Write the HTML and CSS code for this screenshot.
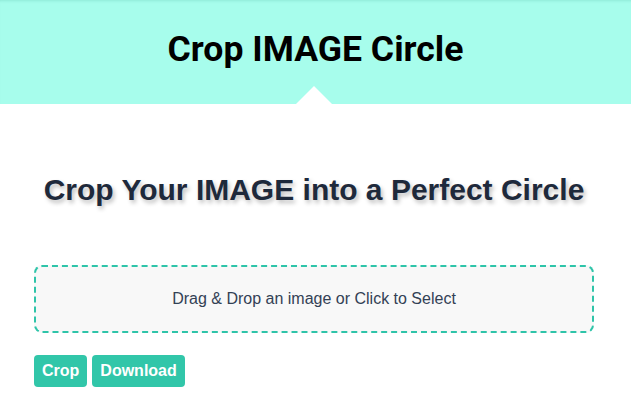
FILE: index.html
```html
<!DOCTYPE html>
<html>
<head>
<meta charset="utf-8">
<link rel="stylesheet" href="styles.css">
</head>
<body>
<header class="top">
  <h1 class="title">Crop IMAGE Circle</h1>
  <span class="arrow"></span>
</header>
<main class="main">
  <h2 class="heading">Crop Your IMAGE into a Perfect Circle</h2>
  <div class="drop">Drag &amp; Drop an image or Click to Select</div>
  <div class="actions">
    <button class="btn">Crop</button>
    <button class="btn">Download</button>
  </div>
</main>
</body>
</html>
```
FILE: styles.css
```css
html, body { margin: 0; padding: 0; background: #fff; }
body { font-family: "Liberation Sans", Arial, sans-serif; }
.top {
  position: relative;
  height: 104px;
  background: #a7fdec;
  box-shadow: inset 0 3px 3px -2px rgba(0,120,100,0.15);
  display: flex;
  align-items: center;
  justify-content: center;
}
.title {
  margin: 0;
  font-family: Roboto, sans-serif;
  font-weight: 700;
  font-size: 35.6px;
  color: #000;
  padding-bottom: 7px;
}
.arrow {
  position: absolute;
  left: 296px;
  bottom: 0;
  width: 0; height: 0;
  border-left: 18px solid transparent;
  border-right: 18px solid transparent;
  border-bottom: 18px solid #fff;
}
.main { padding: 0 37px 0 34px; }
.heading {
  margin: 69px 0 0;
  text-align: center;
  font-size: 30px;
  line-height: 34px;
  font-weight: 700;
  color: #1e293b;
  text-shadow: 2px 3px 4px rgba(0,0,0,0.25);
}
.drop {
  box-sizing: border-box;
  margin-top: 58px;
  height: 68px;
  border: 2px dashed #2ec4a9;
  border-radius: 8px;
  background: #f8f8f8;
  display: flex;
  align-items: center;
  justify-content: center;
  font-size: 16px;
  color: #334155;
}
.actions { display: flex; gap: 5px; margin-top: 22px; }
.btn {
  font-family: "Liberation Sans", Arial, sans-serif;
  font-weight: 700;
  font-size: 16px;
  color: #fff;
  background: #31c6a9;
  border: 0;
  border-radius: 4px;
  height: 32px;
  padding: 0 8px;
}
```
